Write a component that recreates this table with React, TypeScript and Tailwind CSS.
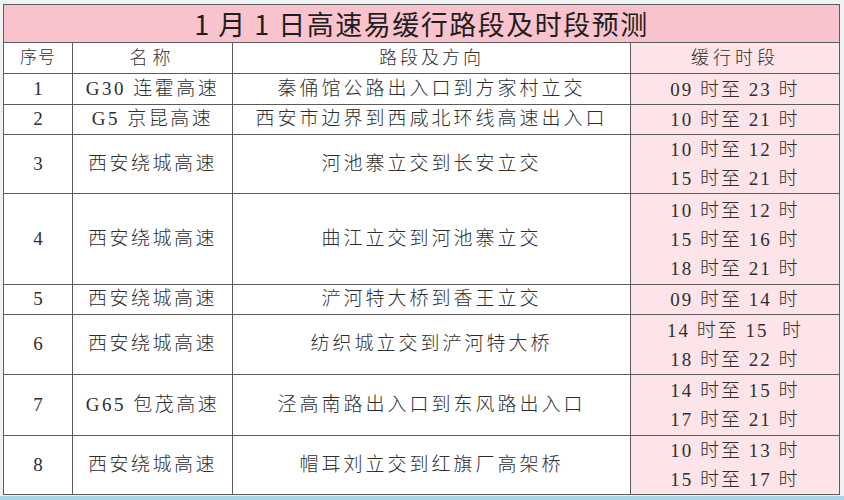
import * as React from "react";

type Row = {
	no: string;
	name: string;
	route: string;
	times: string[];
	height: number;
};

const rows: Row[] = [
	{ no: "1", name: "G30 连霍高速", route: "秦俑馆公路出入口到方家村立交", times: ["09 时至 23 时"], height: 31 },
	{ no: "2", name: "G5 京昆高速", route: "西安市边界到西咸北环线高速出入口", times: ["10 时至 21 时"], height: 30 },
	{ no: "3", name: "西安绕城高速", route: "河池寨立交到长安立交", times: ["10 时至 12 时", "15 时至 21 时"], height: 59 },
	{ no: "4", name: "西安绕城高速", route: "曲江立交到河池寨立交", times: ["10 时至 12 时", "15 时至 16 时", "18 时至 21 时"], height: 91 },
	{ no: "5", name: "西安绕城高速", route: "浐河特大桥到香王立交", times: ["09 时至 14 时"], height: 29 },
	{ no: "6", name: "西安绕城高速", route: "纺织城立交到浐河特大桥", times: ["14 时至 15  时", "18 时至 22 时"], height: 60 },
	{ no: "7", name: "G65 包茂高速", route: "泾高南路出入口到东风路出入口", times: ["14 时至 15 时", "17 时至 21 时"], height: 61 },
	{ no: "8", name: "西安绕城高速", route: "帽耳刘立交到红旗厂高架桥", times: ["10 时至 13 时", "15 时至 17 时"], height: 59 },
];

const cell = "border-[1.5px] border-[#5c5c5c] text-center align-middle p-0";
const font = "font-['Liberation_Serif','Noto_Sans_CJK_SC',serif] font-light text-[#2e2e2e]";

export default function App(): JSX.Element {
	return (
		<div className="flex h-[500px] w-[844px] flex-col bg-[#eef2f3]">
			<div className="px-[3px] pt-[4px]">
				<table className="w-[836px] table-fixed border-collapse bg-white">
					<colgroup>
						<col className="w-[69px]" />
						<col className="w-[160px]" />
						<col className="w-[398px]" />
						<col className="w-[209px]" />
					</colgroup>
					<thead>
						<tr className="h-[38px]">
							<th
								colSpan={4}
								className={`${cell} bg-[#f8c3cd] font-['Noto_Sans_CJK_SC',sans-serif] text-[27px] font-normal leading-none tracking-[1.5px] text-[#1f1f1f]`}
							>
								1 月 1 日高速易缓行路段及时段预测
							</th>
						</tr>
						<tr className="h-[31px]">
							<th className={`${cell} ${font} text-[17px] tracking-[1px]`}>序号</th>
							<th className={`${cell} ${font} text-[18px] tracking-[5px]`}>名称</th>
							<th className={`${cell} ${font} text-[18px] tracking-[3px]`}>路段及方向</th>
							<th className={`${cell} ${font} bg-[#fde4e9] text-[18px] tracking-[4px]`}>缓行时段</th>
						</tr>
					</thead>
					<tbody>
						{rows.map((r) => (
							<tr key={r.no} style={{ height: r.height }}>
								<td className={`${cell} ${font} text-[19px]`}>{r.no}</td>
								<td className={`${cell} ${font} text-[19px] tracking-[2.5px]`}>{r.name}</td>
								<td className={`${cell} ${font} text-[19px] tracking-[3px]`}>{r.route}</td>
								<td className={`${cell} ${font} bg-[#fde4e9] text-[19px] tracking-[2px]`}>
									{r.times.map((t, i) => (
										<div key={i} className="h-[29px] whitespace-pre leading-[29px]">
											{t}
										</div>
									))}
								</td>
							</tr>
						))}
					</tbody>
				</table>
			</div>
			<div className="mt-auto h-[4px] bg-[#a9d3e6]" />
		</div>
	);
}
